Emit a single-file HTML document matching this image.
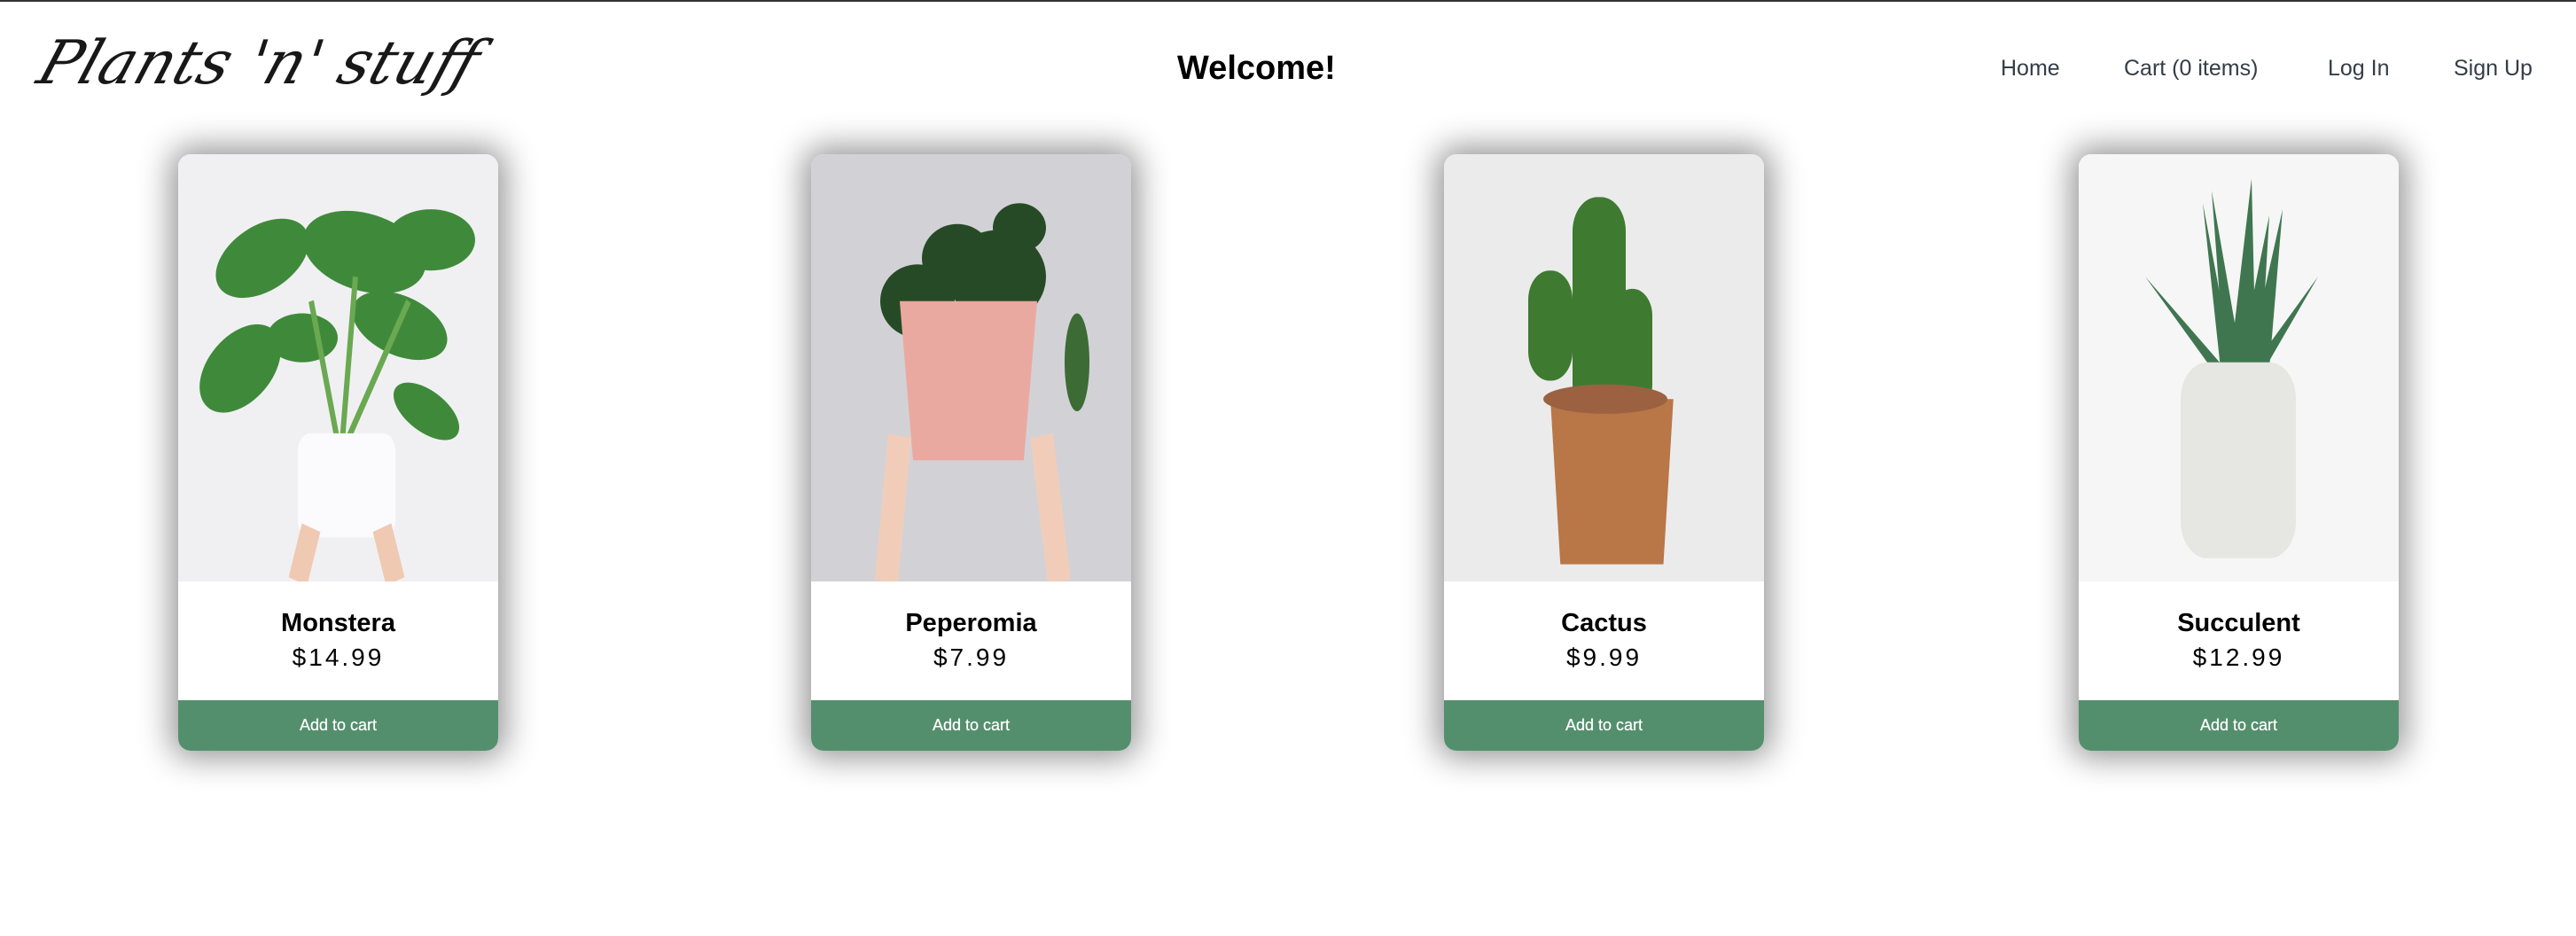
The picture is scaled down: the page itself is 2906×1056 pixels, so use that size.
<!DOCTYPE html>
<html><head><meta charset="utf-8"><style>
*{margin:0;padding:0;box-sizing:border-box}
body{width:2906px;height:1056px;background:#fff;font-family:"Liberation Sans",sans-serif;position:relative;overflow:hidden;border-top:2px solid #333}
.logo{position:absolute;left:46px;top:30px;font-family:"DejaVu Serif","Liberation Serif",serif;font-style:italic;font-size:68px;font-weight:normal;color:#000;letter-spacing:0px;transform:skewX(-18deg);opacity:.9}
.wel{position:absolute;left:1328px;top:54px;font-size:38px;font-weight:bold;color:#000}
.nav{position:absolute;top:61px;font-size:25px;color:#343d47}
.card{position:absolute;top:172px;width:361px;height:673px;border-radius:14px;overflow:hidden;box-shadow:0 0 36px 8px rgba(0,0,0,.42);background:#fff}
.img{height:482px;position:relative}
.img svg{position:absolute;left:0;top:0}
.info{height:134px;text-align:center;padding-top:31px}
.n{font-size:29px;font-weight:bold;color:#000}
.p{font-size:28px;letter-spacing:3px;margin-top:6px;color:#000}
.btn{height:57px;background:#548f6d;color:#fff;font-size:18px;text-align:center;line-height:57px;text-shadow:0 0 .5px #fff}
</style></head><body>
<div class="logo">Plants 'n' stuff</div>
<div class="wel">Welcome!</div>
<div class="nav" style="left:2257px">Home</div>
<div class="nav" style="left:2396px">Cart (0 items)</div>
<div class="nav" style="left:2626px">Log In</div>
<div class="nav" style="left:2768px">Sign Up</div>

<div class="card" style="left:201px">
<div class="img" style="background:#f0f0f2">
<svg width="361" height="482" viewBox="0 0 361 349" preserveAspectRatio="none">
<g fill="#3f8a3a">
<ellipse cx="95" cy="85" rx="55" ry="28" transform="rotate(-20 95 85)"/>
<ellipse cx="210" cy="80" rx="70" ry="32" transform="rotate(10 210 80)"/>
<ellipse cx="285" cy="70" rx="50" ry="25"/>
<ellipse cx="70" cy="175" rx="50" ry="30" transform="rotate(-30 70 175)"/>
<ellipse cx="250" cy="140" rx="55" ry="25" transform="rotate(15 250 140)"/>
<ellipse cx="140" cy="150" rx="40" ry="20"/>
<ellipse cx="280" cy="210" rx="40" ry="18" transform="rotate(25 280 210)"/>
</g>
<path d="M180 235 L150 120 M185 235 L200 100 M190 235 L260 120" stroke="#6aa851" stroke-width="6"/>
<rect x="135" y="228" width="110" height="85" rx="14" fill="#fbfbfd"/>
<path d="M150 305 L135 349 M230 305 L245 349" stroke="#f0c9b3" stroke-width="22"/>
</svg></div>
<div class="info"><div class="n">Monstera</div><div class="p">$14.99</div></div>
<div class="btn">Add to cart</div></div>

<div class="card" style="left:915px">
<div class="img" style="background:#d2d2d6">
<svg width="361" height="482" viewBox="0 0 361 349" preserveAspectRatio="none">
<g fill="#274a26">
<ellipse cx="120" cy="120" rx="42" ry="30"/>
<ellipse cx="210" cy="100" rx="55" ry="38"/>
<ellipse cx="165" cy="85" rx="40" ry="28"/>
<ellipse cx="235" cy="60" rx="30" ry="20"/>
<ellipse cx="300" cy="170" rx="14" ry="40" fill="#3d6b35"/>
</g>
<path d="M100 120 L255 120 L240 250 L115 250Z" fill="#eaa9a0"/>
<path d="M100 230 L85 349 M260 230 L280 349" stroke="#f1cdb9" stroke-width="26"/>
</svg></div>
<div class="info"><div class="n">Peperomia</div><div class="p">$7.99</div></div>
<div class="btn">Add to cart</div></div>

<div class="card" style="left:1629px">
<div class="img" style="background:#ebebeb">
<svg width="361" height="482" viewBox="0 0 361 349" preserveAspectRatio="none">
<g fill="#3e7a30">
<rect x="145" y="35" width="60" height="180" rx="28"/>
<rect x="95" y="95" width="50" height="90" rx="24"/>
<rect x="190" y="110" width="45" height="100" rx="22"/>
</g>
<path d="M100 200 L285 200 L270 335 L115 335Z" transform="translate(45,0) scale(0.75,1)" fill="#b97647"/>
<ellipse cx="182" cy="200" rx="70" ry="12" fill="#9b6140"/>
</svg></div>
<div class="info"><div class="n">Cactus</div><div class="p">$9.99</div></div>
<div class="btn">Add to cart</div></div>

<div class="card" style="left:2345px">
<div class="img" style="background:#f6f6f6">
<svg width="361" height="482" viewBox="0 0 361 349" preserveAspectRatio="none">
<g fill="#3f7650">
<path d="M160 175 L140 40 L175 175Z"/><path d="M170 175 L195 20 L200 175Z"/>
<path d="M180 175 L215 50 L205 175Z"/><path d="M150 175 L75 100 L165 175Z"/>
<path d="M195 175 L270 100 L210 175Z"/><path d="M165 175 L150 30 L185 175Z"/>
<path d="M190 175 L230 45 L215 175Z"/>
</g>
<rect x="115" y="170" width="130" height="160" rx="30" fill="#e6e6e2"/>
</svg></div>
<div class="info"><div class="n">Succulent</div><div class="p">$12.99</div></div>
<div class="btn">Add to cart</div></div>
</body></html>
